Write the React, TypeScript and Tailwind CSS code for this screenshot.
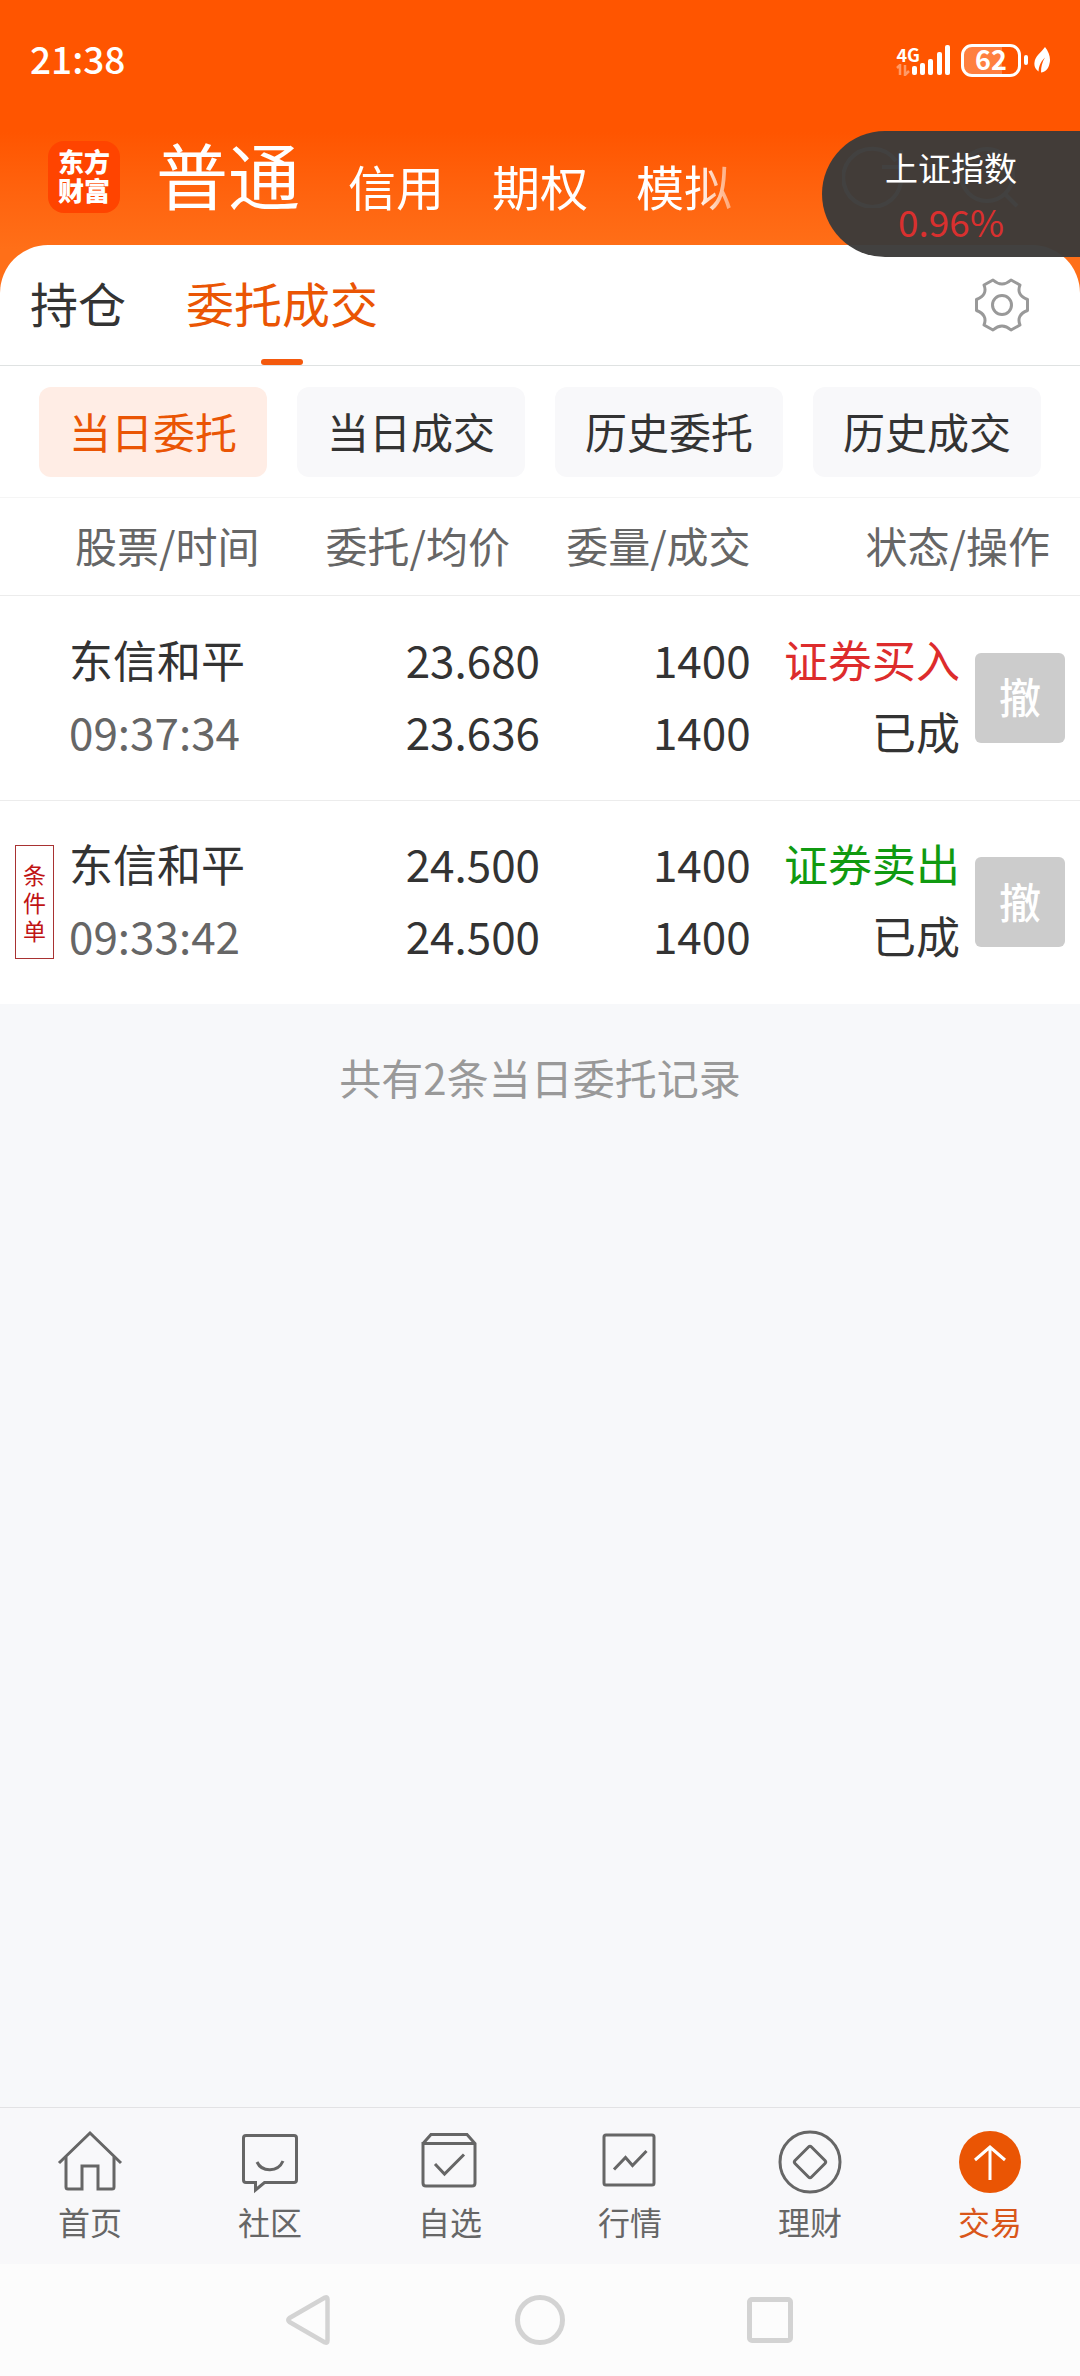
import type { ReactNode } from 'react'
import clsx from 'clsx'

interface Order {
  name: string
  time: string
  price: string
  avgPrice: string
  amount: string
  dealt: string
  side: 'buy' | 'sell'
  status: string
  conditional?: boolean
}

const accounts = ['信用', '期权', '模拟']

const filters = ['当日委托', '当日成交', '历史委托', '历史成交']

const orders: Order[] = [
  { name: '东信和平', time: '09:37:34', price: '23.680', avgPrice: '23.636', amount: '1400', dealt: '1400', side: 'buy', status: '已成' },
  { name: '东信和平', time: '09:33:42', price: '24.500', avgPrice: '24.500', amount: '1400', dealt: '1400', side: 'sell', status: '已成', conditional: true },
]

const tabs: { label: string; icon: ReactNode }[] = [
  {
    label: '首页',
    icon: (
      <>
        <path d="M2 34 33 4l31 30" />
        <path d="M9 28v30q0 2 2 2h14V37h16v23h14q2 0 2-2V28" />
      </>
    ),
  },
  {
    label: '社区',
    icon: (
      <>
        <path d="M9 6.500h48q2.500 0 2.500 2.500v42q0 2.500-2.500 2.500H27.500l-9 7.500v-7.500H9q-2.500 0-2.500-2.500V9q0-2.500 2.500-2.500Z" />
        <path d="M20 33c5 10.500 21 10.500 26-1" />
      </>
    ),
  },
  {
    label: '自选',
    icon: (
      <>
        <path d="M6 14.500 14 5.500h36l8 9V54q0 3-3 3H9q-3 0-3-3V14.500h52" />
        <path d="m18 35 9.500 10L47 25.500" />
      </>
    ),
  },
  {
    label: '行情',
    icon: (
      <>
        <rect x="7" y="6" width="50" height="50" rx="2" />
        <path d="m17 40.500 11.500-12 7 8L49.500 22" />
      </>
    ),
  },
  {
    label: '理财',
    icon: (
      <>
        <circle cx="33" cy="33" r="30" />
        <path d="M31.500 18q1.500-1.500 3 0L48 31.500q1.500 1.500 0 3L34.500 48q-1.500 1.500-3 0L18 34.500q-1.500-1.500 0-3Z" />
      </>
    ),
  },
  {
    label: '交易',
    icon: (
      <>
        <circle cx="33" cy="33" r="31" fill="#ea5504" stroke="none" />
        <path d="M33 51V18M18 31l15-13 15 13" stroke="#fff" />
      </>
    ),
  },
]

function StatusBar() {
  return (
    <div className="flex h-[120px] items-center justify-between px-[30px] text-white">
      <span className="pb-1 text-[37px] leading-[48px] font-medium">21:38</span>
      <div className="flex items-center gap-[10px]">
        <div className="flex items-end">
          <div className="flex flex-col">
            <span className="text-[18px] leading-[20px] font-bold">4G</span>
            <svg className="h-[12px] w-[14px] opacity-40" viewBox="0 0 14 12" fill="none" stroke="currentColor" strokeWidth="2.500">
              <path d="M1 4l3-3v10M9 1v10l4-4" />
            </svg>
          </div>
          <svg className="-ml-2 h-[32px] w-[39px]" viewBox="0 0 39 32" fill="currentColor">
            <rect x="0" y="22" width="5" height="9" rx="2" />
            <rect x="8" y="19" width="5" height="12" rx="2" />
            <rect x="16" y="15" width="5" height="16" rx="2" />
            <rect x="25" y="8" width="5" height="23" rx="2" />
            <rect x="33" y="1" width="5" height="30" rx="2" />
          </svg>
        </div>
        <div className="flex items-center gap-[3px]">
          <div className="flex h-[33px] w-[60px] items-center justify-center rounded-[11px] border-[3px] border-white bg-linear-to-r from-white/25 from-70% to-transparent to-70% pb-[3px] text-[27px] leading-none font-bold">
            62
          </div>
          <div className="h-[10px] w-[4px] rounded-full bg-white" />
          <svg className="ml-[3px] h-[26px] w-[16px]" viewBox="0 0 16 26" fill="currentColor">
            <path d="M11 0c4 5 6 11 4.500 16.500C14.500 22 11 25.500 7 25.500c0-6 1-10 4-15-4 4-6 8-6.500 14C1 22 0 19 .500 15.500 1 9 7 6 11 0Z" />
          </svg>
        </div>
      </div>
    </div>
  )
}

function IndexPill() {
  return (
    <button className="absolute top-[131px] right-0 z-10 flex h-[126px] w-[258px] flex-col items-center justify-center rounded-l-full bg-[#3c3b3a]/97 text-white">
      <span className="text-[33px] leading-[54px]">上证指数</span>
      <span className="text-[37px] leading-[54px] text-[#d9302f]">0.96%</span>
    </button>
  )
}

function Header() {
  return (
    <header className="bg-linear-to-b from-[#ff5500] from-45% to-[#ff6f18] to-85% pb-12">
      <StatusBar />
      <div className="flex h-[125px] items-center pb-3 pl-12 text-white">
        <div className="flex h-[72px] w-[72px] shrink-0 items-center justify-center rounded-2xl bg-[#ff4400] pb-[3px]">
          <span className="w-[52px] text-[26px] leading-[29px] font-black break-all">东方财富</span>
        </div>
        <nav className="ml-9 flex items-end gap-12 pb-2 whitespace-nowrap [mask-image:linear-gradient(to_right,black_94%,transparent_104%)]">
          <a href="#normal" className="text-[72px] leading-[84px]">普通</a>
          {accounts.map((account) => (
            <a key={account} href={`#${account}`} className="text-[48px] leading-[60px]">
              {account}
            </a>
          ))}
        </nav>
        <div className="mr-[60px] ml-auto flex gap-[54px]">
          <button aria-label="刷新">
            <svg className="h-[62px] w-[62px]" viewBox="0 0 62 62" fill="none" stroke="currentColor" strokeWidth="4">
              <path d="M59 36A29 29 0 1 1 54 15M59 4v17H40" />
            </svg>
          </button>
          <button aria-label="搜索">
            <svg className="h-[62px] w-[62px]" viewBox="0 0 62 62" fill="none" stroke="currentColor" strokeWidth="4">
              <circle cx="29" cy="29" r="26" />
              <path d="m47 48 12 12" />
            </svg>
          </button>
        </div>
      </div>
    </header>
  )
}

function SectionTabs() {
  return (
    <div className="flex h-[121px] items-stretch border-b border-[#dfe2e2] pr-[51px] pl-[30px]">
      <a href="#positions" className="flex items-center pb-1.5 text-[48px] leading-none">持仓</a>
      <a href="#orders" className="relative ml-[60px] flex items-center pb-1.5 text-[48px] leading-none text-[#ea5504]">
        委托成交
        <span className="absolute bottom-0 left-1/2 h-[6px] w-[42px] -translate-x-1/2 rounded-full bg-[#f4590d]" />
      </a>
      <button aria-label="设置" className="ml-auto text-[#999]">
        <svg className="h-[54px] w-[54px]" viewBox="0 0 54 54" fill="none" stroke="currentColor" strokeWidth="3" strokeLinejoin="round">
          <path d="M18 2Q27 10 36 2L45 7Q41 17 52.500 21.500V32.500Q41 37 45 47L36 52Q27 44 18 52L9 47Q13 37 1.500 32.500V21.500Q13 17 9 7Z" />
          <circle cx="27" cy="27" r="9.500" />
        </svg>
      </button>
    </div>
  )
}

function FilterBar() {
  return (
    <div className="grid grid-cols-4 gap-[30px] border-b border-[#f5f5f5] px-[39px] pt-[21px] pb-5">
      {filters.map((filter, i) => (
        <button
          key={filter}
          className={clsx('h-[90px] rounded-xl pb-[3px] text-[42px] leading-none', i === 0 ? 'bg-[#ffede5] text-[#ea5504]' : 'bg-[#f8f8fa]')}
        >
          {filter}
        </button>
      ))}
    </div>
  )
}

function OrderRow({ order }: { order: Order }) {
  return (
    <tr className="h-[205px] border-b border-[#ececec] text-right text-[44px] leading-[72px] last:h-[204px] last:border-b-0">
      <td className="p-0">
        <div className="flex items-center text-left">
          <div className="w-[69px] shrink-0 pl-[15px]">
            {order.conditional && (
              <span className="flex h-[114px] w-[39px] items-center justify-center border border-[#a83232] text-[#c01414]">
                <span className="w-[23px] text-[23px] leading-[28px] break-all">条件单</span>
              </span>
            )}
          </div>
          <div className="pb-1.5">
            <div>{order.name}</div>
            <div className="text-[#666]">{order.time}</div>
          </div>
        </div>
      </td>
      <td className="p-0 pb-1.5">
        <div>{order.price}</div>
        <div>{order.avgPrice}</div>
      </td>
      <td className="p-0 pb-1.5">
        <div>{order.amount}</div>
        <div>{order.dealt}</div>
      </td>
      <td className="p-0">
        <div className="flex items-center justify-end gap-[15px] pr-[15px]">
          <div className="pb-1.5">
            <div className={order.side === 'buy' ? 'text-[#dd2c2c]' : 'text-[#109a10]'}>
              {order.side === 'buy' ? '证券买入' : '证券卖出'}
            </div>
            <div>{order.status}</div>
          </div>
          <button className="h-[90px] w-[90px] rounded-md bg-[#ccc] pb-[3px] text-[42px] leading-none font-medium text-white">撤</button>
        </div>
      </td>
    </tr>
  )
}

function OrderTable() {
  return (
    <table className="w-full table-fixed border-collapse">
      <thead>
        <tr className="h-[97px] border-b border-[#ececec] text-[42px] leading-none text-[#666]">
          <th className="w-[30%] p-0 pb-[3px] pl-[75px] text-left font-normal">股票/时间</th>
          <th className="w-[20%] p-0 pr-[30px] pb-[3px] text-right font-normal">委托/均价</th>
          <th className="w-[19.5%] p-0 pb-[3px] text-right font-normal">委量/成交</th>
          <th className="p-0 pr-[30px] pb-[3px] text-right font-normal">状态/操作</th>
        </tr>
      </thead>
      <tbody>
        {orders.map((order) => (
          <OrderRow key={order.time} order={order} />
        ))}
      </tbody>
    </table>
  )
}

function TabBar() {
  return (
    <nav className="grid h-[157px] grid-cols-6 border-t border-[#e2e2e4] bg-[#f8f8fa] pt-[21px]">
      {tabs.map((tab) => (
        <a
          key={tab.label}
          href={`#${tab.label}`}
          className={clsx('flex flex-col items-center gap-1.5 text-[32px] leading-[40px]', tab.label === '交易' ? 'text-[#d9561a]' : 'text-[#666]')}
        >
          <svg className="h-[66px] w-[66px]" viewBox="0 0 66 66" fill="none" stroke="currentColor" strokeWidth="3">
            {tab.icon}
          </svg>
          {tab.label}
        </a>
      ))}
    </nav>
  )
}

function SystemNav() {
  return (
    <div className="grid h-[112px] grid-cols-3 items-center justify-items-center bg-[#fcfcfc] px-[18%] text-[#d3d3d3]">
      <button aria-label="返回">
        <svg className="h-[52px] w-[52px]" viewBox="0 0 52 52" fill="none" stroke="currentColor" strokeWidth="4.500" strokeLinejoin="round">
          <path d="M43.500 5.500q0-3-2.500-2L5.500 24q-2.500 2 0 4L41 48.500q2.500 1 2.500-2Z" />
        </svg>
      </button>
      <button aria-label="主屏幕" className="h-[50px] w-[50px] rounded-full border-[5px] border-current" />
      <button aria-label="最近任务" className="h-[46px] w-[46px] rounded-[5px] border-[5px] border-current" />
    </div>
  )
}

export default function App() {
  return (
    <div className="relative flex min-h-screen flex-col bg-[#f7f8fa] font-['Noto_Sans_CJK_SC',sans-serif] text-[#333]">
      <Header />
      <IndexPill />
      <main className="-mt-12 flex-1">
        <section className="rounded-t-[48px] bg-white">
          <SectionTabs />
          <FilterBar />
          <OrderTable />
        </section>
        <p className="py-[43px] text-center text-[42px] leading-[60px] text-[#999]">共有2条当日委托记录</p>
      </main>
      <TabBar />
      <SystemNav />
    </div>
  )
}
